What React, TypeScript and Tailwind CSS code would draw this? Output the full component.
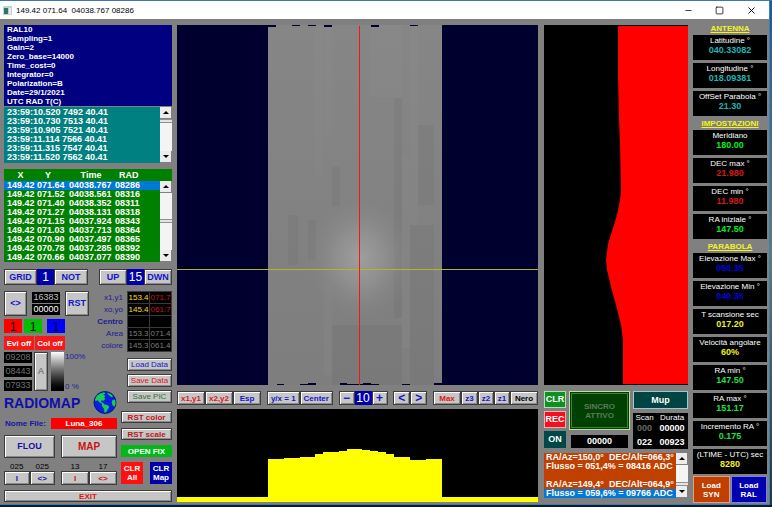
import type { ReactNode } from 'react';
import { clsx } from 'clsx';
import { Minus, Square, X } from 'lucide-react';

interface BtnProps {
  children: ReactNode;
  className?: string;
  label?: string;
}

const Btn = ({ children, className, label }: BtnProps) => (
  <button
    aria-label={label}
    className={clsx(
      'flex items-center justify-center whitespace-nowrap border border-[#3c3c3c] bg-[#c6c6c6] font-bold shadow-[inset_1px_1px_0_#fff,inset_-1px_-1px_0_#8a8a8a]',
      className
    )}
  >
    {children}
  </button>
);

const FlatBtn = ({ children, className, label }: BtnProps) => (
  <button
    aria-label={label}
    className={clsx('flex items-center justify-center whitespace-nowrap font-bold text-white', className)}
  >
    {children}
  </button>
);

const Arrow = ({ up }: { up?: boolean }) => (
  <button
    aria-label={up ? 'Scroll up' : 'Scroll down'}
    className="flex h-3 w-full items-center justify-center border-r border-b border-[#808080] bg-[#ececec]"
  >
    <svg viewBox="0 0 6 3" className="h-[3px] w-[6px]">
      <path d={up ? 'M0 3L3 0L6 3Z' : 'M0 0L3 3L6 0Z'} fill="#000" />
    </svg>
  </button>
);

const Scrollbar = ({ thumb }: { thumb: string }) => (
  <div className="flex w-3 shrink-0 flex-col bg-[#f4f4f4]">
    <Arrow up />
    <div className="relative flex-1">
      <div className={clsx('absolute inset-x-0 border-y border-[#909090] bg-[#e4e4e4]', thumb)} />
    </div>
    <Arrow />
  </div>
);

const info = [
  'RAL10',
  'Sampling=1',
  'Gain=2',
  'Zero_base=14000',
  'Time_cost=0',
  'Integrator=0',
  'Polarization=B',
  'Date=29/1/2021',
  'UTC RAD T(C)',
];

const samples = [
  '23:59:10.520 7492 40.41',
  '23:59:10.730 7513 40.41',
  '23:59:10.905 7521 40.41',
  '23:59:11.114 7566 40.41',
  '23:59:11.315 7547 40.41',
  '23:59:11.520 7562 40.41',
];

const points = [
  ['149.42', '071.64', '04038.767', '08286'],
  ['149.42', '071.52', '04038.561', '08316'],
  ['149.42', '071.40', '04038.352', '08311'],
  ['149.42', '071.27', '04038.131', '08318'],
  ['149.42', '071.15', '04037.924', '08343'],
  ['149.42', '071.03', '04037.713', '08364'],
  ['149.42', '070.90', '04037.497', '08365'],
  ['149.42', '070.78', '04037.285', '08392'],
  ['149.42', '070.66', '04037.077', '08390'],
];

const coords = [
  { label: 'x1,y1', a: '153.4', b: '071.7', ca: 'text-yellow-300', cb: 'text-[#d01414]' },
  { label: 'xo,yo', a: '145.4', b: '061.7', ca: 'text-yellow-300', cb: 'text-[#d01414]' },
  { label: 'Centro', a: '', b: '', ca: '', cb: '' },
  { label: 'Area', a: '153.3', b: '071.4', ca: 'text-[#7c7c7c]', cb: 'text-[#7c7c7c]' },
  { label: 'colore', a: '145.3', b: '061.4', ca: 'text-[#7c7c7c]', cb: 'text-[#7c7c7c]' },
];

const groups = [
  {
    title: 'ANTENNA',
    items: [
      ['Latitudine °', '040.33082', 'text-[#1fb5b5]'],
      ['Longitudine °', '018.09381', 'text-[#1fb5b5]'],
      ['OffSet Parabola °', '21.30', 'text-[#1fb5b5]'],
    ],
  },
  {
    title: 'IMPOSTAZIONI',
    items: [
      ['Meridiano', '180.00', 'text-[#00f020]'],
      ['DEC max °', '21.980', 'text-[#d01818]'],
      ['DEC min °', '11.980', 'text-[#d01818]'],
      ['RA iniziale °', '147.50', 'text-[#00f020]'],
    ],
  },
  {
    title: 'PARABOLA',
    items: [
      ['Elevazione Max °', '050.35', 'text-[#0000e0]'],
      ['Elevazione Min °', '040.35', 'text-[#0000e0]'],
      ['T scansione sec', '017.20', 'text-[#f0f020]'],
      ['Velocità angolare', '60%', 'text-[#f0f020]'],
      ['RA min °', '147.50', 'text-[#20e040]'],
      ['RA max °', '151.17', 'text-[#20e040]'],
      ['Incremento RA °', '0.175', 'text-[#20e040]'],
      ['(LTIME - UTC) sec', '8280', 'text-[#f0f020]'],
    ],
  },
];

const Globe = () => (
  <svg viewBox="0 0 24 24" className="h-[23px] w-[24px]">
    <circle cx="12" cy="12" r="11.5" fill="#0a1ee0" stroke="#001060" strokeWidth="0.8" />
    <path
      d="M1.500 9L3.500 5L7 2.500L11 1.200L12.500 2.500L10 4L12.500 5L11 7L12.500 8L10 10.500L8.500 9.500L8 11.500L10 12.500L11.500 14L14.500 14.500L16.500 16.500L15 19L13 22.500L11.500 22.500L11 18.500L9 16L9 13.500L6.500 12L4 9.500L2.500 11Z"
      fill="#18d050"
    />
    <path d="M14 1.500L18 3L20.500 5.500L19 6.500L17 5L15.500 4Z" fill="#18d050" />
    <path d="M20 9L22.500 9L23.200 12.500L22 16.500L20 15L19 12Z" fill="#18d050" />
  </svg>
);

const SkyMap = () => (
  <svg
    viewBox="0 0 361 360"
    preserveAspectRatio="none"
    shapeRendering="crispEdges"
    className="h-[360px] w-full bg-[#00002e]"
  >
    <defs>
      <linearGradient id="sky" x1="0" y1="0" x2="0" y2="1">
        <stop offset="0" stopColor="#868686" />
        <stop offset="1" stopColor="#7e7e7e" />
      </linearGradient>
      <radialGradient id="moon">
        <stop offset="0" stopColor="#9e9e9e" />
        <stop offset="0.4" stopColor="#969696" stopOpacity="0.75" />
        <stop offset="1" stopColor="#848484" stopOpacity="0" />
      </radialGradient>
    </defs>
    <rect x="91" width="174" height="360" fill="url(#sky)" />
    <g fill="#fff" opacity="0.02">
      <rect x="138" width="8" height="150" />
      <rect x="147" width="8" height="110" />
      <rect x="194" width="31" height="72" />
      <rect x="225" y="133" width="8" height="190" />
      <rect x="233" width="8" height="200" />
      <rect x="147" y="260" width="8" height="90" />
    </g>
    <g fill="#000" opacity="0.03">
      <rect x="111" y="190" width="10" height="50" />
      <rect x="131" y="195" width="8" height="40" />
      <rect x="155" y="142" width="8" height="40" />
      <rect x="217" y="73" width="8" height="220" />
      <rect x="233" y="200" width="24" height="160" />
      <rect x="241" y="100" width="16" height="80" />
      <rect x="155" y="300" width="70" height="60" />
    </g>
    <ellipse cx="183" cy="233" rx="54" ry="64" fill="url(#moon)" />
    <path
      d="M91 0h8v2h-8zM115 0h8v1h-8zM131 0h8v1h-8zM147 0h8v2h-8zM194 0h8v2h-8zM233 0h8v1h-8zM100 359h7v1h-7zM123 359h8v1h-8zM131 358h8v2h-8zM163 358h7v2h-7zM170 359h32v1h-32zM186 358h8v2h-8zM225 359h8v1h-8zM257 358h8v2h-8z"
      fill="#00002e"
    />
    <rect y="244" width="361" height="1" fill="#b4b428" />
    <rect x="182" y="1" width="1" height="359" fill="#f01810" />
  </svg>
);

const App = () => {
  return (
    <div className="flex min-h-screen flex-col border-t border-[#3a78b0] bg-[#0c1a2c] font-['Liberation_Sans',Arial,sans-serif] text-[8px] leading-[9px]">
      <div className="flex">
        <div className="flex min-w-0 flex-1 flex-col border-r border-b border-[#3f7fae] bg-[#808080]">
          <header className="flex h-[18px] items-center bg-white pr-3 pl-[3px]">
            <svg viewBox="0 0 9 9" className="h-[9px] w-[9px]">
              <rect width="9" height="9" fill="#c8d0d0" />
              <rect x="1" y="2" width="4" height="6" fill="#2a7868" />
              <rect x="6" y="2" width="2" height="6" fill="#e8ecec" />
            </svg>
            <h1 className="ml-1 flex-1 whitespace-pre text-black">149.42 071.64  04038.767 08286</h1>
            <div className="flex items-center gap-[22px] text-black">
              <button aria-label="Minimize"><Minus className="h-[9px] w-[9px]" /></button>
              <button aria-label="Maximize"><Square className="h-[9px] w-[9px]" strokeWidth={2} /></button>
              <button aria-label="Close"><X className="h-[11px] w-[11px]" /></button>
            </div>
          </header>

          <main className="flex gap-[5px] pr-[2px] pb-px pl-1">
            <section className="flex w-[168px] shrink-0 flex-col pt-[6px]">
              <div className="bg-[#000080] pl-[3px] font-bold text-white">
                {info.map((line) => (
                  <p key={line}>{line}</p>
                ))}
              </div>
              <div className="mt-px flex bg-[#008080] font-bold text-white">
                <ul className="flex-1 py-px pl-[3px] text-[9px] whitespace-nowrap">
                  {samples.map((s) => (
                    <li key={s}>{s}</li>
                  ))}
                </ul>
                <Scrollbar thumb="top-0 h-1" />
              </div>

              <div className="mt-[6px] flex bg-[#008000] font-bold text-white">
                <table className="flex-1 table-fixed border-collapse text-[9px]">
                  <thead>
                    <tr className="h-3">
                      <th className="w-[33px]">X</th>
                      <th className="w-[30px] pr-2">Y</th>
                      <th className="w-[48px]">Time</th>
                      <th className="w-[45px] pl-[4px] text-left">RAD</th>
                    </tr>
                  </thead>
                  <tbody>
                    {points.map((row, i) => (
                      <tr key={row[2]} className={i === 0 ? 'bg-[#0078d7]' : undefined}>
                        <td className="p-0 pl-[3px]">{row[0]}</td>
                        <td className="p-0">{row[1]}</td>
                        <td className="p-0 pl-[2px]">{row[2]}</td>
                        <td className="p-0">{row[3]}</td>
                      </tr>
                    ))}
                  </tbody>
                </table>
                <div className="flex pt-3">
                  <Scrollbar thumb="top-[26px] h-1" />
                </div>
              </div>

              <div className="mt-[7px] flex justify-between text-[9px] text-[#1414c8]">
                <div className="flex h-4">
                  <Btn className="w-[33px]">GRID</Btn>
                  <output className="flex w-[17px] items-center justify-center bg-[#0000a8] text-xs text-white">1</output>
                  <Btn className="w-[34px]">NOT</Btn>
                </div>
                <div className="flex h-4">
                  <Btn className="w-7">UP</Btn>
                  <output className="flex w-[17px] items-center justify-center bg-[#0000a8] text-xs text-white">15</output>
                  <Btn className="w-7">DWN</Btn>
                </div>
              </div>

              <div className="mt-[6px] flex justify-between">
                <div className="flex w-[85px] flex-col gap-[3px]">
                  <div className="flex h-[25px] justify-between text-[9px] text-[#1414c8]">
                    <Btn className="w-[23px]">&lt;&gt;</Btn>
                    <div className="flex w-7 flex-col justify-center gap-px text-center text-white">
                      <output className="bg-black leading-[11px] text-[#c0c0c0]">16383</output>
                      <output className="bg-black leading-[11px]">00000</output>
                    </div>
                    <Btn className="w-6">RST</Btn>
                  </div>
                  <div className="flex h-[14px] text-xs text-black">
                    <button className="w-[18px] bg-[#ff0000]">1</button>
                    <button className="ml-[2px] w-[18px] bg-[#00c000]">1</button>
                    <button className="ml-[5px] w-[18px] bg-[#0000ff]">1</button>
                  </div>
                  <div className="flex h-[14px] gap-px">
                    <FlatBtn className="w-[30px] bg-[#f81818]">Evi off</FlatBtn>
                    <FlatBtn className="w-[30px] bg-[#f81818]">Col off</FlatBtn>
                  </div>
                </div>
                <table className="border-collapse text-center">
                  <tbody>
                    {coords.map((c) => (
                      <tr key={c.label} className="h-3">
                        <th
                          className={clsx(
                            'p-0 pr-1 text-right text-[#1c1c90]',
                            c.label === 'Centro' ? 'font-bold' : 'font-normal'
                          )}
                        >
                          {c.label}
                        </th>
                        <td className={clsx('w-[22px] border border-[#3a3a3a] bg-black p-0', c.ca)}>{c.a}</td>
                        <td className={clsx('w-[22px] border border-[#3a3a3a] bg-black p-0', c.cb)}>{c.b}</td>
                      </tr>
                    ))}
                  </tbody>
                </table>
              </div>

              <div className="flex justify-between">
                <div className="flex w-[113px] flex-col">
                  <div className="flex h-[39px]">
                    <div className="flex w-7 flex-col gap-[3px] text-center text-[9px] text-[#707070]">
                      {['09208', '08443', '07933'].map((n) => (
                        <output key={n} className="bg-black leading-[11px]">{n}</output>
                      ))}
                    </div>
                    <Btn className="ml-[2px] w-[14px] text-[9px] text-[#808080]">A</Btn>
                    <div className="ml-[3px] w-[13px] bg-linear-to-b from-white to-black" />
                    <div className="ml-px flex flex-col justify-between text-[#2020a0]">
                      <span>100%</span>
                      <span>0 %</span>
                    </div>
                  </div>
                  <div className="flex h-[23px] items-center justify-between">
                    <h2 className="text-sm font-bold text-[#1010a8]">RADIOMAP</h2>
                    <Globe />
                  </div>
                  <div className="mt-1 flex h-[11px] items-center justify-between">
                    <label htmlFor="file" className="pl-px font-bold whitespace-nowrap text-[#1414a8]">
                      Nome File:
                    </label>
                    <input
                      id="file"
                      defaultValue="Luna_306"
                      className="h-[11px] w-[66px] bg-[#ff0000] text-center font-bold text-white"
                    />
                  </div>
                  <div className="mt-[6px] flex h-[23px] gap-[6px]">
                    <Btn className="w-[51px] text-[9px] text-[#1414a8]">FLOU</Btn>
                    <Btn className="flex-1 text-[10px] text-[#c81414]">MAP</Btn>
                  </div>
                  <div className="mt-1 flex gap-[6px] text-center text-black">
                    <div className="grid w-[51px] grid-cols-2">
                      <span>025</span>
                      <span>025</span>
                      <Btn className="h-[14px] text-[#1414a8]">I</Btn>
                      <Btn className="h-[14px] text-[#1414a8]">&lt;&gt;</Btn>
                    </div>
                    <div className="grid flex-1 grid-cols-2">
                      <span>13</span>
                      <span>17</span>
                      <Btn className="h-[14px] text-[#c81414]">I</Btn>
                      <Btn className="h-[14px] text-[#c81414]">&lt;&gt;</Btn>
                    </div>
                  </div>
                </div>

                <div className="flex w-[51px] flex-col pt-[6px]">
                  <div className="flex flex-col items-end gap-[3px]">
                    <Btn className="h-[13px] w-[45px] font-normal text-[#1414c8]">Load Data</Btn>
                    <Btn className="h-[13px] w-[45px] font-normal text-[#e01414]">Save Data</Btn>
                    <Btn className="h-[13px] w-[45px] font-normal text-[#287828]">Save PIC</Btn>
                  </div>
                  <div className="mt-2 flex flex-col gap-[5px]">
                    <Btn className="h-3 text-[#c01414]">RST color</Btn>
                    <Btn className="h-3 text-[#c01414]">RST scale</Btn>
                    <FlatBtn className="h-3 bg-[#00b818]">OPEN FIX</FlatBtn>
                  </div>
                  <div className="mt-[5px] flex h-[22px] justify-between">
                    <FlatBtn className="w-[22px] bg-[#ff1010]">
                      CLR
                      <br />
                      All
                    </FlatBtn>
                    <FlatBtn className="w-[22px] bg-[#0000a8]">
                      CLR
                      <br />
                      Map
                    </FlatBtn>
                  </div>
                </div>
              </div>
              <Btn className="mt-[5px] h-3 text-[#e01414]">EXIT</Btn>
            </section>

            <section className="flex min-w-0 flex-1 flex-col pt-[6px]">
              <SkyMap />
              <div className="mt-[6px] flex h-[14px] justify-between text-[#1414c8]">
                <div className="flex">
                  <Btn className="w-7 text-[#e01414]">x1,y1</Btn>
                  <Btn className="w-7 text-[#e01414]">x2,y2</Btn>
                  <Btn className="w-7">Esp</Btn>
                </div>
                <div className="flex">
                  <Btn className="w-[33px]">y/x = 1</Btn>
                  <Btn className="w-[33px]">Center</Btn>
                </div>
                <div className="flex text-xs">
                  <Btn className="w-4" label="Less">−</Btn>
                  <output className="flex w-[17px] items-center justify-center bg-[#0000a8] text-white">10</output>
                  <Btn className="w-4" label="More">+</Btn>
                </div>
                <div className="flex text-xs">
                  <Btn className="w-[17px]">&lt;</Btn>
                  <Btn className="w-[17px]">&gt;</Btn>
                </div>
                <div className="flex">
                  <Btn className="w-7 text-[#e01414]">Max</Btn>
                  <Btn className="w-[17px]">z3</Btn>
                  <Btn className="w-4">z2</Btn>
                  <Btn className="w-4">z1</Btn>
                  <Btn className="w-7 text-black">Nero</Btn>
                </div>
              </div>
              <svg
                viewBox="0 0 361 93"
                preserveAspectRatio="none"
                shapeRendering="crispEdges"
                className="mt-[4px] h-[93px] w-full bg-black"
              >
                <path
                  d="M0 93V88H91V50H107V49H123V48H138V45H146V43H162V42H170V40H185V41H193V42H201V43H209V45H217V48H233V51H249V50H265V88H361V93Z"
                  fill="#ffff00"
                />
              </svg>
            </section>

            <section className="ml-px flex w-36 shrink-0 flex-col pt-[6px]">
              <svg viewBox="0 0 144 360" preserveAspectRatio="none" className="h-[360px] w-full bg-black">
                <path
                  d="M74 1V52L75 95L76 120L77 165L76 175L73 190L68 206L64 219L62 235L63 245L67 262L72 280L77 300L79 315L79 359H144V1Z"
                  fill="#ff0000"
                />
              </svg>
              <div className="mt-[6px] flex justify-between">
                <div className="flex w-[22px] flex-col gap-[3px] text-[9px]">
                  <FlatBtn className="h-[17px] border border-[#b0e0b0] bg-[#109020]">CLR</FlatBtn>
                  <FlatBtn className="h-[17px] border border-[#f0b0b0] bg-[#f01020]">REC</FlatBtn>
                  <FlatBtn className="h-[17px] bg-[#004848]">ON</FlatBtn>
                </div>
                <div className="flex w-[61px] flex-col gap-[5px] text-center font-bold">
                  <button className="h-[39px] border border-[#c0e0a0] bg-[#004000] p-px font-bold text-[#5c7a5c]">
                    <span className="flex h-full items-center justify-center border border-[#408040]">
                      SINCRO
                      <br />
                      ATTIVO
                    </span>
                  </button>
                  <output className="mx-[2px] bg-black text-[9px] leading-[13px] text-white">00000</output>
                </div>
                <div className="flex w-[55px] flex-col gap-1">
                  <FlatBtn className="h-[18px] border border-[#a0c8c8] bg-[#004444] text-[9px]">Mup</FlatBtn>
                  <table className="h-9 w-full border-collapse bg-black text-center text-white">
                    <thead>
                      <tr>
                        <th className="p-0 font-normal">Scan</th>
                        <th className="p-0 font-normal">Durata</th>
                      </tr>
                    </thead>
                    <tbody className="text-[9px] font-bold">
                      <tr>
                        <td className="p-0 text-[#686868]">000</td>
                        <td className="p-0">00000</td>
                      </tr>
                      <tr>
                        <td className="p-0">022</td>
                        <td className="p-0">00923</td>
                      </tr>
                    </tbody>
                  </table>
                </div>
              </div>
              <div className="mt-[4px] flex bg-[#c04000] text-[9px] font-bold text-white">
                <div className="min-w-0 flex-1 overflow-hidden whitespace-pre">
                  <p className="pl-[2px]">RA/Az=150,0°  DEC/Alt=066,3°</p>
                  <p className="pl-[2px]">Flusso = 051,4% = 08416 ADC</p>
                  <p className="h-[9px]" />
                  <p className="pl-[2px]">RA/Az=149,4°  DEC/Alt=064,9°</p>
                  <p className="bg-[#0078d7] pl-[2px]">Flusso = 059,6% = 09766 ADC</p>
                </div>
                <Scrollbar thumb="bottom-0 h-1" />
              </div>
            </section>

            <aside className="flex w-[74px] shrink-0 flex-col pt-[2px] text-center">
              {groups.map((g) => (
                <div key={g.title}>
                  <h3 className="h-[14px] pt-[3px] font-bold text-[#f4f41c] underline">{g.title}</h3>
                  <dl className="flex flex-col gap-[3px]">
                    {g.items.map(([name, value, color]) => (
                      <div key={name} className="h-[25px] bg-black whitespace-nowrap">
                        <dt className="pt-px text-white">{name}</dt>
                        <dd className={clsx('pt-px text-[9px] font-bold', color)}>{value}</dd>
                      </div>
                    ))}
                  </dl>
                </div>
              ))}
              <div className="mt-[2px] grid h-[27px] grid-cols-2 gap-px">
                <FlatBtn className="border border-[#e0a080] bg-[#c04000]">
                  Load
                  <br />
                  SYN
                </FlatBtn>
                <FlatBtn className="border border-[#8080e0] bg-[#0000b0]">
                  Load
                  <br />
                  RAL
                </FlatBtn>
              </div>
            </aside>
          </main>
        </div>
        <div className="w-[2px] bg-linear-to-b from-[#1c5a98] via-[#5c7c7c] to-[#203850]" />
      </div>
    </div>
  );
};

export default App;
